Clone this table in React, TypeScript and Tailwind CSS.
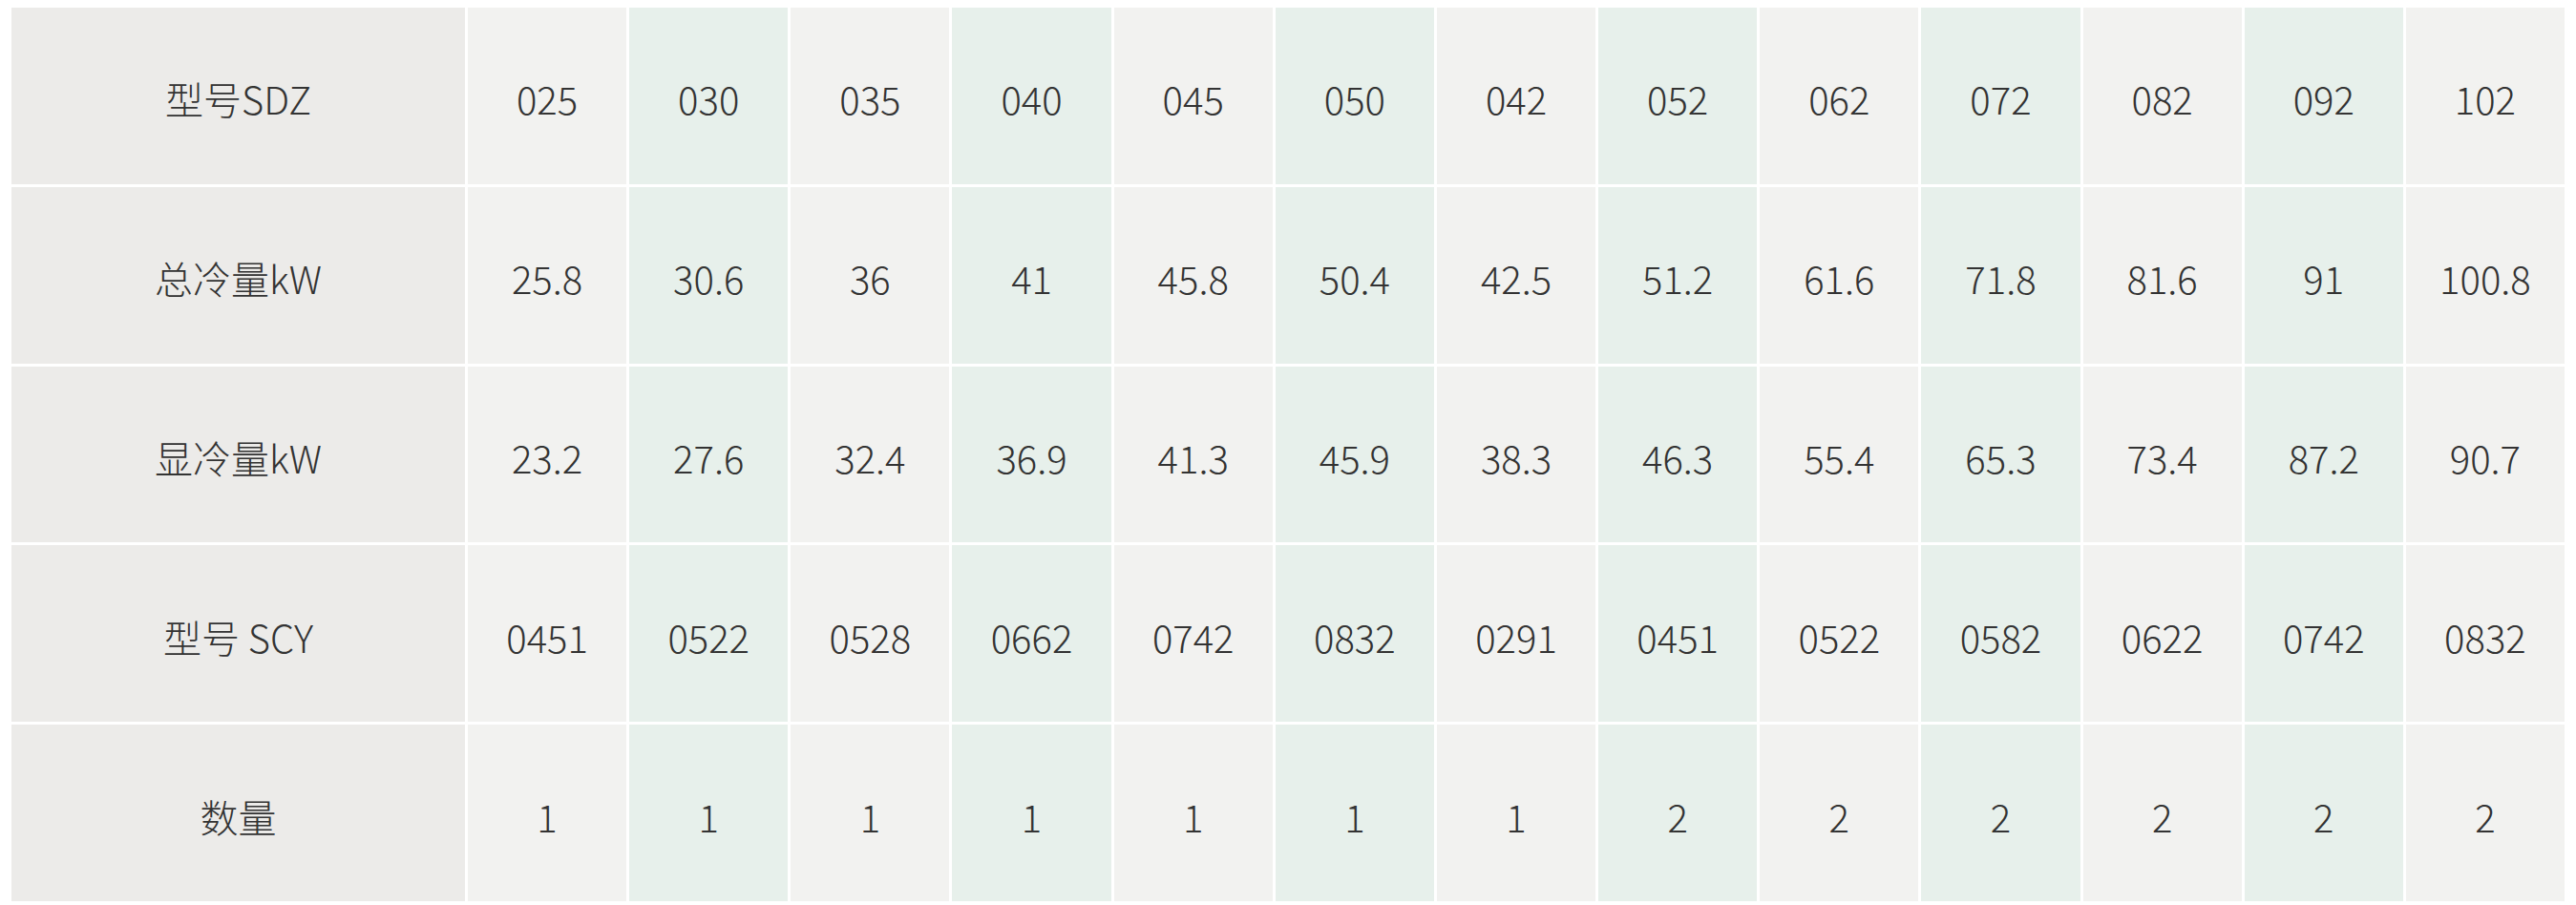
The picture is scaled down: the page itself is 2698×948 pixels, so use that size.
import React from 'react'

type Row = {
  label: string
  values: string[]
}

const rows: Row[] = [
  { label: '型号SDZ', values: ['025', '030', '035', '040', '045', '050', '042', '052', '062', '072', '082', '092', '102'] },
  { label: '总冷量kW', values: ['25.8', '30.6', '36', '41', '45.8', '50.4', '42.5', '51.2', '61.6', '71.8', '81.6', '91', '100.8'] },
  { label: '显冷量kW', values: ['23.2', '27.6', '32.4', '36.9', '41.3', '45.9', '38.3', '46.3', '55.4', '65.3', '73.4', '87.2', '90.7'] },
  { label: '型号 SCY', values: ['0451', '0522', '0528', '0662', '0742', '0832', '0291', '0451', '0522', '0582', '0622', '0742', '0832'] },
  { label: '数量', values: ['1', '1', '1', '1', '1', '1', '1', '2', '2', '2', '2', '2', '2'] },
]

const Cell: React.FC<{ children: React.ReactNode; green: boolean }> = ({ children, green }) => (
  <div className={`flex items-center justify-center pt-[6px] ${green ? 'bg-[#e7f0eb]' : 'bg-[#f2f2f0]'}`}>
    {children}
  </div>
)

export default function App() {
  return (
    <div className="bg-white w-[2698px] h-[948px] pt-[8px] pl-[12px] font-['Noto_Sans_CJK_SC','Noto_Sans',sans-serif] font-extralight text-[40px] text-[#333333]">
      <div className="grid grid-cols-[475px_repeat(13,1fr)] grid-rows-5 gap-[3px] w-[2674px] h-[936px]">
        {rows.map((row) => (
          <React.Fragment key={row.label}>
            <div className="flex items-center justify-center pt-[6px] bg-[#ecebe9] font-light">{row.label}</div>
            {row.values.map((v, i) => (
              <Cell key={i} green={i % 2 === 1}>
                {v}
              </Cell>
            ))}
          </React.Fragment>
        ))}
      </div>
    </div>
  )
}
